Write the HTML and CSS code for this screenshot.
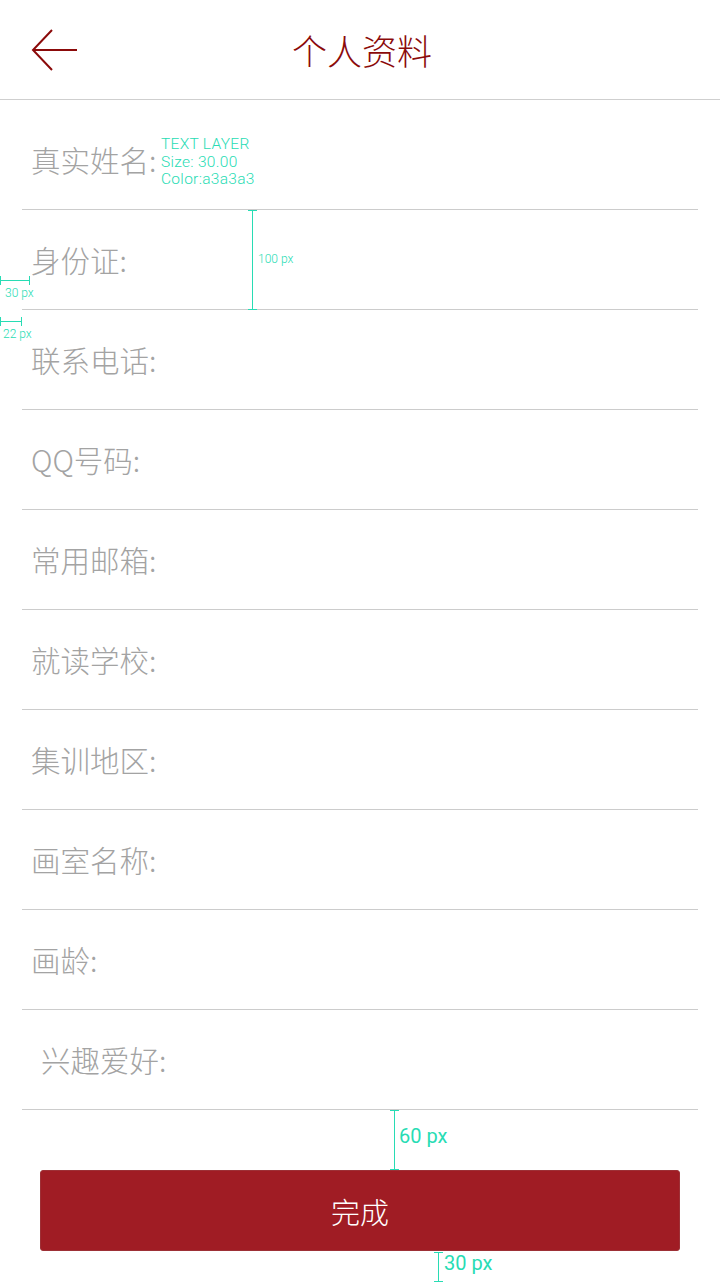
FILE: index.html
```html
<!DOCTYPE html>
<html lang="zh-CN">
<head>
<meta charset="utf-8">
<title>个人资料</title>
<link rel="stylesheet" href="styles.css">
</head>
<body>
<div class="page">
  <header class="topbar">
    <svg class="back" width="48" height="44" viewBox="0 0 48 44" aria-hidden="true">
      <path d="M21 2 L2 22 L21 42 M2 22 L46 22" fill="none" stroke="#8b0a0a" stroke-width="2"/>
    </svg>
    <h1 class="title">个人资料</h1>
  </header>

  <main class="form">
    <div class="row first"><span class="label">真实姓名:</span></div>
    <div class="row"><span class="label">身份证:</span></div>
    <div class="row"><span class="label">联系电话:</span></div>
    <div class="row"><span class="label">QQ号码:</span></div>
    <div class="row"><span class="label">常用邮箱:</span></div>
    <div class="row"><span class="label">就读学校:</span></div>
    <div class="row"><span class="label">集训地区:</span></div>
    <div class="row"><span class="label">画室名称:</span></div>
    <div class="row"><span class="label">画龄:</span></div>
    <div class="row"><span class="label indent">兴趣爱好:</span></div>
  </main>

  <div class="actions">
    <button class="done">完成</button>
  </div>

  <div class="note note-text">TEXT LAYER<br>Size: 30.00<br>Color:a3a3a3</div>
  <div class="vmark vmark-100"></div>
  <div class="note note-100">100 px</div>
  <div class="hmark hmark-30"></div>
  <div class="note note-30">30 px</div>
  <div class="hmark hmark-22"></div>
  <div class="note note-22">22 px</div>
  <div class="vmark vmark-60"></div>
  <div class="note big note-60">60 px</div>
  <div class="vmark vmark-b30"></div>
  <div class="note big note-b30">30 px</div>
</div>
</body>
</html>
```

FILE: styles.css
```css
html, body {
  margin: 0;
  padding: 0;
  background: #ffffff;
}

.page {
  position: relative;
  width: 720px;
  height: 1282px;
  overflow: hidden;
  font-family: "Noto Sans CJK SC", "Noto Sans", sans-serif;
}

.topbar {
  position: relative;
  height: 99px;
  border-bottom: 1px solid #cfcfcf;
  display: flex;
  align-items: center;
  justify-content: center;
}

.back {
  position: absolute;
  left: 31px;
  top: 28px;
}

.title {
  margin: 0;
  font-size: 35px;
  font-weight: 300;
  color: #8b0a0a;
  line-height: 1;
  padding-left: 4px;
}

.form {
  display: flex;
  flex-direction: column;
  padding-top: 10px;
}

.row {
  box-sizing: border-box;
  height: 100px;
  margin: 0 22px;
  border-bottom: 1px solid #cccccc;
  display: flex;
  align-items: center;
}

.label {
  font-size: 29.5px;
  font-weight: 300;
  color: #a3a3a3;
  margin-left: 9px;
  line-height: 1;
}

.label.indent {
  margin-left: 19px;
}

.actions {
  padding: 60px 40px 0;
}

.done {
  display: block;
  box-sizing: border-box;
  width: 640px;
  height: 81px;
  border: 1px solid #9d3036;
  border-radius: 3px;
  background: #a01c24;
  color: #ffffff;
  font-family: "Noto Sans CJK SC", "Noto Sans", sans-serif;
  font-size: 29px;
  font-weight: 300;
  padding: 0;
}

/* measurement annotations (overlay) */
.note {
  position: absolute;
  color: #28dcb4;
  font-family: Roboto, "Liberation Sans", Arial, sans-serif;
  font-weight: 300;
  font-size: 12px;
  line-height: 1;
  white-space: nowrap;
}

.note.big {
  font-weight: 400;
  font-size: 20px;
}

.note-text {
  left: 161px;
  top: 136px;
  font-size: 15.5px;
  line-height: 17.5px;
  letter-spacing: 0.3px;
}

.note-100 { left: 258px; top: 253px; }
.note-30 { left: 5px; top: 287px; }
.note-22 { left: 3px; top: 328px; }
.note-60 { left: 399px; top: 1126px; }
.note-b30 { left: 444px; top: 1253px; }

.vmark {
  position: absolute;
  width: 0;
  border-left: 1px solid #28dcb4;
}

.vmark::before,
.vmark::after {
  content: "";
  position: absolute;
  left: -5px;
  width: 9px;
  height: 1px;
  background: #28dcb4;
}

.vmark::before { top: 0; }
.vmark::after { bottom: 0; }

.vmark-100 { left: 252px; top: 210px; height: 100px; }
.vmark-60 { left: 394px; top: 1110px; height: 60px; }
.vmark-b30 { left: 438px; top: 1252px; height: 30px; }

.hmark {
  position: absolute;
  height: 0;
  border-top: 1px solid #28dcb4;
}

.hmark::before,
.hmark::after {
  content: "";
  position: absolute;
  top: -5px;
  width: 1px;
  height: 9px;
  background: #28dcb4;
}

.hmark::before { left: 0; }
.hmark::after { right: 0; }

.hmark-30 { left: 0; top: 280px; width: 30px; }
.hmark-22 { left: 0; top: 321px; width: 22px; }
```
